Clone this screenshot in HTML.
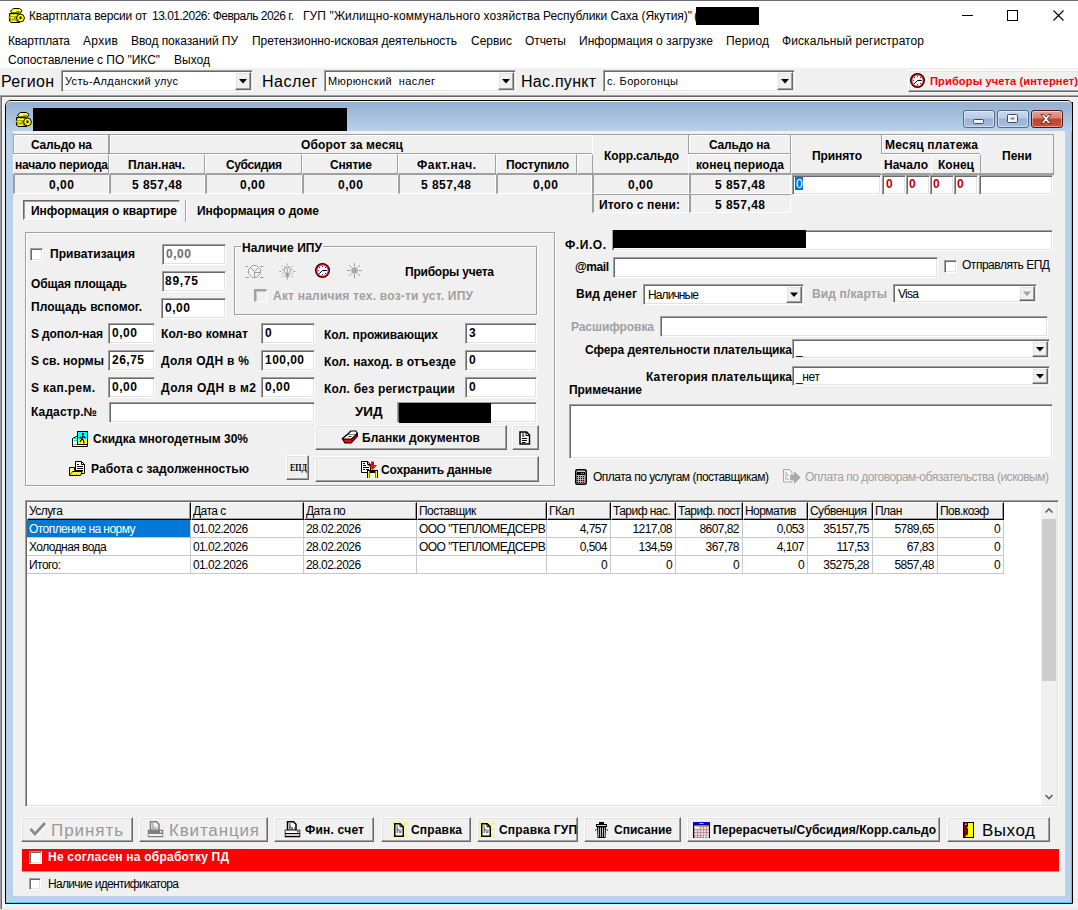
<!DOCTYPE html>
<html><head><meta charset="utf-8"><style>
html,body{margin:0;padding:0;}
body{width:1078px;height:910px;position:relative;overflow:hidden;background:#f0f0f0;font-family:"Liberation Sans",sans-serif;}
body>div,body>span,body>svg{position:absolute;}
.t{white-space:pre;line-height:20px;height:20px;}
</style></head><body>
<div style="left:0px;top:0px;width:1078px;height:68px;background:#fff"></div>
<div style="left:0px;top:0px;width:1078px;height:1px;background:#6b6b78"></div>
<svg style="left:8px;top:8px" width="17" height="16" viewBox="0 0 17 16">
<path d="M5.5 0.5h6l2.5 2-1.5 2.5h-8l-2-1.5 1-1.5z" fill="#ffff00" stroke="#000"/>
<path d="M8 3h4.5l-1 1.5h-4z" fill="#9a9a00"/>
<rect x="5" y="2.5" width="3" height="1" fill="#fff"/>
<path d="M1.5 5.5h9l1 1.5v7.5h-8.5l-1.5-1.5z" fill="#a8a800" stroke="#000"/>
<rect x="2.5" y="6.5" width="7" height="1.5" fill="#ffff00"/>
<rect x="3" y="9" width="3" height="1.5" fill="#ffff00"/>
<rect x="0.5" y="8.5" width="2.5" height="2" fill="#a8a800"/>
<rect x="3" y="12.5" width="5" height="1.5" fill="#ffff00"/>
<circle cx="12.5" cy="10" r="3.9" fill="#ffff00" stroke="#000"/>
<path d="M11.5 8.5h2v2.5h-2z" fill="#000"/>
<path d="M10 11l1 2" stroke="#9a9a00"/>
</svg>
<span id="t0" class="t" style="left:29px;top:6px;font-size:12px;font-weight:normal;color:#000;letter-spacing:-0.175px;">Квартплата версии от</span>
<span id="t1" class="t" style="left:152px;top:6px;font-size:12px;font-weight:normal;color:#000;letter-spacing:-0.504px;">13.01.2026: Февраль 2026 г.</span>
<span id="t2" class="t" style="left:303px;top:6px;font-size:12px;font-weight:normal;color:#000;letter-spacing:0.109px;">ГУП "Жилищно-коммунального хозяйства</span>
<span id="t3" class="t" style="left:543px;top:6px;font-size:12px;font-weight:normal;color:#000;letter-spacing:-0.061px;">Республики Саха (Якутия)"</span>
<span id="t4" class="t" style="left:694px;top:6px;font-size:12px;font-weight:normal;color:#000;">(</span>
<div style="left:696px;top:7px;width:63px;height:18px;background:#000"></div>
<div style="left:962px;top:15px;width:11px;height:1px;background:#000"></div>
<div style="left:1007px;top:10px;width:11px;height:11px;border:1px solid #000;box-sizing:border-box"></div>
<svg style="left:1052px;top:9px" width="13" height="13"><path d="M1.5 1.5l10 10M11.5 1.5l-10 10" stroke="#000" stroke-width="1.1"/></svg>
<span id="t5" class="t" style="left:8px;top:31px;font-size:12px;font-weight:normal;color:#000;letter-spacing:-0.196px;">Квартплата</span>
<span id="t6" class="t" style="left:83px;top:31px;font-size:12px;font-weight:normal;color:#000;letter-spacing:0.344px;">Архив</span>
<span id="t7" class="t" style="left:131px;top:31px;font-size:12px;font-weight:normal;color:#000;letter-spacing:-0.063px;">Ввод показаний ПУ</span>
<span id="t8" class="t" style="left:252px;top:31px;font-size:12px;font-weight:normal;color:#000;letter-spacing:-0.052px;">Претензионно-исковая деятельность</span>
<span id="t9" class="t" style="left:471px;top:31px;font-size:12px;font-weight:normal;color:#000;letter-spacing:-0.019px;">Сервис</span>
<span id="t10" class="t" style="left:525px;top:31px;font-size:12px;font-weight:normal;color:#000;letter-spacing:-0.097px;">Отчеты</span>
<span id="t11" class="t" style="left:579px;top:31px;font-size:12px;font-weight:normal;color:#000;letter-spacing:0.027px;">Информация о загрузке</span>
<span id="t12" class="t" style="left:726px;top:31px;font-size:12px;font-weight:normal;color:#000;letter-spacing:0.181px;">Период</span>
<span id="t13" class="t" style="left:782px;top:31px;font-size:12px;font-weight:normal;color:#000;letter-spacing:0.082px;">Фискальный регистратор</span>
<span id="t14" class="t" style="left:8px;top:50px;font-size:12px;font-weight:normal;color:#000;letter-spacing:-0.041px;">Сопоставление с ПО "ИКС"</span>
<span id="t15" class="t" style="left:174px;top:50px;font-size:12px;font-weight:normal;color:#000;letter-spacing:0.023px;">Выход</span>
<span id="t16" class="t" style="left:1px;top:72px;font-size:16px;font-weight:normal;color:#000;letter-spacing:0.325px;">Регион</span>
<div style="left:61px;top:70px;width:192px;height:22px;background:#fff;border-top:1px solid #a0a0a0;border-left:1px solid #a0a0a0;border-right:1px solid #fff;border-bottom:1px solid #fff;box-sizing:border-box;box-shadow:inset 1px 1px 0 #696969, inset -1px -1px 0 #e3e3e3"></div>
<div style="left:235px;top:72px;width:16px;height:18px;background:#f0f0f0;border-top:1px solid #fff;border-left:1px solid #fff;border-right:1px solid #696969;border-bottom:1px solid #696969;box-sizing:border-box;box-shadow:inset -1px -1px 0 #a0a0a0, inset 1px 1px 0 #e3e3e3"></div>
<svg style="left:235px;top:72px" width="16" height="18"><path d="M4.0 7.0h8l-4 4.5z" fill="#000"/></svg>
<span id="t17" class="t" style="left:65px;top:71px;font-size:11px;font-weight:normal;color:#000;letter-spacing:0.346px;">Усть-Алданский улус</span>
<span id="t18" class="t" style="left:262px;top:72px;font-size:16px;font-weight:normal;color:#000;letter-spacing:0.494px;">Наслег</span>
<div style="left:324px;top:70px;width:192px;height:22px;background:#fff;border-top:1px solid #a0a0a0;border-left:1px solid #a0a0a0;border-right:1px solid #fff;border-bottom:1px solid #fff;box-sizing:border-box;box-shadow:inset 1px 1px 0 #696969, inset -1px -1px 0 #e3e3e3"></div>
<div style="left:498px;top:72px;width:16px;height:18px;background:#f0f0f0;border-top:1px solid #fff;border-left:1px solid #fff;border-right:1px solid #696969;border-bottom:1px solid #696969;box-sizing:border-box;box-shadow:inset -1px -1px 0 #a0a0a0, inset 1px 1px 0 #e3e3e3"></div>
<svg style="left:498px;top:72px" width="16" height="18"><path d="M4.0 7.0h8l-4 4.5z" fill="#000"/></svg>
<span id="t19" class="t" style="left:328px;top:71px;font-size:11px;font-weight:normal;color:#000;letter-spacing:0.387px;">Мюрюнский  наслег</span>
<span id="t20" class="t" style="left:521px;top:72px;font-size:16px;font-weight:normal;color:#000;letter-spacing:0.262px;">Нас.пункт</span>
<div style="left:603px;top:70px;width:192px;height:22px;background:#fff;border-top:1px solid #a0a0a0;border-left:1px solid #a0a0a0;border-right:1px solid #fff;border-bottom:1px solid #fff;box-sizing:border-box;box-shadow:inset 1px 1px 0 #696969, inset -1px -1px 0 #e3e3e3"></div>
<div style="left:777px;top:72px;width:16px;height:18px;background:#f0f0f0;border-top:1px solid #fff;border-left:1px solid #fff;border-right:1px solid #696969;border-bottom:1px solid #696969;box-sizing:border-box;box-shadow:inset -1px -1px 0 #a0a0a0, inset 1px 1px 0 #e3e3e3"></div>
<svg style="left:777px;top:72px" width="16" height="18"><path d="M4.0 7.0h8l-4 4.5z" fill="#000"/></svg>
<span id="t21" class="t" style="left:607px;top:71px;font-size:11px;font-weight:normal;color:#000;letter-spacing:0.331px;">с. Борогонцы</span>
<div style="left:908px;top:70px;width:177px;height:22px;background:#f0f0f0;border-top:1px solid #fff;border-left:1px solid #fff;border-right:1px solid #696969;border-bottom:1px solid #696969;box-sizing:border-box;box-shadow:inset -1px -1px 0 #a0a0a0, inset 1px 1px 0 #e3e3e3"></div>
<svg style="left:910px;top:73px" width="16" height="16" viewBox="0 0 16 16">
<circle cx="7.5" cy="7.5" r="7.5" fill="#000"/>
<circle cx="7.5" cy="7.5" r="6.5" fill="#ff0000"/>
<circle cx="7.5" cy="7.5" r="5.2" fill="#fff"/>
<g fill="#0000ff"><rect x="7" y="2.8" width="1" height="1"/><rect x="11.2" y="7" width="1" height="1"/><rect x="7" y="11.2" width="1" height="1"/><rect x="2.8" y="7" width="1" height="1"/>
<rect x="10" y="4" width="1" height="1"/><rect x="4" y="4" width="1" height="1"/><rect x="10" y="10" width="1" height="1"/><rect x="4" y="10" width="1" height="1"/></g>
<path d="M7.5 7.5h3.5" stroke="#000" stroke-width="1.2"/>
<path d="M7.5 7.5l-2.5 2.5" stroke="#000" stroke-width="1"/>
</svg>
<span id="t22" class="t" style="left:930px;top:71px;font-size:11px;font-weight:bold;color:#ff0000;letter-spacing:0.171px;">Приборы учета (интернет)</span>
<div style="left:0px;top:95px;width:1078px;height:1px;background:#a0a0a0"></div>
<div style="left:0px;top:96px;width:1078px;height:1px;background:#696969"></div>
<div style="left:0px;top:95px;width:1px;height:815px;background:#a0a0a0"></div>
<div style="left:1px;top:96px;width:1px;height:814px;background:#696969"></div>
<div style="left:2px;top:97px;width:1076px;height:813px;background:#f0f0f0;border-top:1px solid #fafafa;border-left:1px solid #fafafa;box-sizing:border-box"></div>
<div style="left:0px;top:909px;width:1078px;height:1px;background:#e6e6e6"></div>
<div style="left:5px;top:100px;width:1068px;height:804px;background:#b9d1ea;border:1px solid #000;border-radius:6px 6px 0 0;box-sizing:border-box"></div>
<div style="left:6px;top:101px;width:1066px;height:30px;background:linear-gradient(#94afd0,#b9d1ea);border-radius:5px 5px 0 0;border-top:1px solid #f4f8fc;box-sizing:border-box"></div>
<div style="left:1072px;top:102px;width:1px;height:801px;background:#000"></div>
<div style="left:6px;top:902px;width:1066px;height:1px;background:#3fd6f5"></div>
<div style="left:1071px;top:131px;width:1px;height:772px;background:#3fd6f5"></div>
<svg style="left:15px;top:112px" width="17" height="16" viewBox="0 0 17 16">
<path d="M5.5 0.5h6l2.5 2-1.5 2.5h-8l-2-1.5 1-1.5z" fill="#ffff00" stroke="#000"/>
<path d="M8 3h4.5l-1 1.5h-4z" fill="#9a9a00"/>
<rect x="5" y="2.5" width="3" height="1" fill="#fff"/>
<path d="M1.5 5.5h9l1 1.5v7.5h-8.5l-1.5-1.5z" fill="#a8a800" stroke="#000"/>
<rect x="2.5" y="6.5" width="7" height="1.5" fill="#ffff00"/>
<rect x="3" y="9" width="3" height="1.5" fill="#ffff00"/>
<rect x="0.5" y="8.5" width="2.5" height="2" fill="#a8a800"/>
<rect x="3" y="12.5" width="5" height="1.5" fill="#ffff00"/>
<circle cx="12.5" cy="10" r="3.9" fill="#ffff00" stroke="#000"/>
<path d="M11.5 8.5h2v2.5h-2z" fill="#000"/>
<path d="M10 11l1 2" stroke="#9a9a00"/>
</svg>
<div style="left:33px;top:108px;width:314px;height:23px;background:#000"></div>
<div style="left:963px;top:110px;width:32px;height:18px;background:linear-gradient(#c9daef 0%,#b6cbe6 45%,#97b1d2 50%,#a9c1df 100%);border:1px solid #53688a;border-radius:3px;box-sizing:border-box;box-shadow:inset 0 0 0 1px rgba(255,255,255,0.45)"></div>
<div style="left:997px;top:110px;width:32px;height:18px;background:linear-gradient(#c9daef 0%,#b6cbe6 45%,#97b1d2 50%,#a9c1df 100%);border:1px solid #53688a;border-radius:3px;box-sizing:border-box;box-shadow:inset 0 0 0 1px rgba(255,255,255,0.45)"></div>
<div style="left:1031px;top:110px;width:32px;height:18px;background:linear-gradient(#e8a496 0%,#d47f6d 45%,#c2412a 50%,#c9513a 100%);border:1px solid #4e1912;border-radius:3px;box-sizing:border-box;box-shadow:inset 0 0 0 1px rgba(255,255,255,0.45)"></div>
<svg style="left:963px;top:110px" width="100" height="18"><rect x="10.5" y="9.5" width="10" height="4" rx="1" fill="#f4f4f4" stroke="#3a4a60" stroke-width="1"/><rect x="44.5" y="4.5" width="10" height="8" rx="1" fill="#f4f4f4" stroke="#3a4a60" stroke-width="1"/><rect x="47.5" y="7.5" width="4" height="2" fill="#6d86a8"/><path d="M78 4.5l3 0 2 2.5 2-2.5 3 0-3.5 4.5 3.5 4.5-3 0-2-2.5-2 2.5-3 0 3.5-4.5z" fill="#f4f4f4" stroke="#4a2018" stroke-width="0.8"/></svg>
<div style="left:13px;top:131px;width:1052px;height:765px;background:#f0f0f0"></div>
<div style="left:13px;top:134px;width:96px;height:20px;background:#f0f0f0;border-top:1px solid #a0a0a0;border-left:1px solid #a0a0a0;border-right:1px solid #a0a0a0;border-bottom:1px solid #a0a0a0;box-sizing:border-box;box-shadow:inset 1px 1px 0 #fff"></div>
<div style="left:109px;top:134px;width:484px;height:20px;background:#f0f0f0;border-top:1px solid #a0a0a0;border-left:1px solid #a0a0a0;border-right:1px solid #a0a0a0;border-bottom:1px solid #a0a0a0;box-sizing:border-box;box-shadow:inset 1px 1px 0 #fff"></div>
<div style="left:592px;top:134px;width:97px;height:41px;background:#f0f0f0;border-top:1px solid #fff;border-left:1px solid #fff;border-right:1px solid #a0a0a0;border-bottom:2px solid #a0a0a0;box-sizing:border-box"></div>
<div style="left:592px;top:134px;width:97px;height:1px;background:#a0a0a0"></div>
<div style="left:688px;top:134px;width:103px;height:20px;background:#f0f0f0;border-top:1px solid #a0a0a0;border-left:1px solid #a0a0a0;border-right:1px solid #a0a0a0;border-bottom:1px solid #a0a0a0;box-sizing:border-box;box-shadow:inset 1px 1px 0 #fff"></div>
<div style="left:791px;top:134px;width:91px;height:41px;background:#f0f0f0;border-top:1px solid #fff;border-left:1px solid #fff;border-right:1px solid #a0a0a0;border-bottom:2px solid #a0a0a0;box-sizing:border-box"></div>
<div style="left:791px;top:134px;width:91px;height:1px;background:#a0a0a0"></div>
<div style="left:881px;top:134px;width:100px;height:20px;background:#f0f0f0;border-top:1px solid #a0a0a0;border-left:1px solid #a0a0a0;border-right:1px solid #a0a0a0;border-bottom:1px solid #a0a0a0;box-sizing:border-box;box-shadow:inset 1px 1px 0 #fff"></div>
<div style="left:980px;top:134px;width:74px;height:41px;background:#f0f0f0;border-top:1px solid #fff;border-left:1px solid #fff;border-right:1px solid #a0a0a0;border-bottom:2px solid #a0a0a0;box-sizing:border-box"></div>
<div style="left:980px;top:134px;width:74px;height:1px;background:#a0a0a0"></div>
<div style="left:13px;top:154px;width:96px;height:21px;background:#f0f0f0;border-top:1px solid #fff;border-left:1px solid #fff;border-right:1px solid #a0a0a0;border-bottom:2px solid #a0a0a0;box-sizing:border-box"></div>
<div style="left:109px;top:154px;width:96px;height:21px;background:#f0f0f0;border-top:1px solid #fff;border-left:1px solid #fff;border-right:1px solid #a0a0a0;border-bottom:2px solid #a0a0a0;box-sizing:border-box"></div>
<div style="left:205px;top:154px;width:97px;height:21px;background:#f0f0f0;border-top:1px solid #fff;border-left:1px solid #fff;border-right:1px solid #a0a0a0;border-bottom:2px solid #a0a0a0;box-sizing:border-box"></div>
<div style="left:302px;top:154px;width:96px;height:21px;background:#f0f0f0;border-top:1px solid #fff;border-left:1px solid #fff;border-right:1px solid #a0a0a0;border-bottom:2px solid #a0a0a0;box-sizing:border-box"></div>
<div style="left:398px;top:154px;width:98px;height:21px;background:#f0f0f0;border-top:1px solid #fff;border-left:1px solid #fff;border-right:1px solid #a0a0a0;border-bottom:2px solid #a0a0a0;box-sizing:border-box"></div>
<div style="left:496px;top:154px;width:81px;height:21px;background:#f0f0f0;border-top:1px solid #fff;border-left:1px solid #fff;border-right:1px solid #a0a0a0;border-bottom:2px solid #a0a0a0;box-sizing:border-box"></div>
<div style="left:577px;top:154px;width:16px;height:21px;background:#f0f0f0;border-top:1px solid #fff;border-left:1px solid #fff;border-right:1px solid #a0a0a0;border-bottom:2px solid #a0a0a0;box-sizing:border-box"></div>
<div style="left:688px;top:154px;width:103px;height:21px;background:#f0f0f0;border-top:1px solid #fff;border-left:1px solid #fff;border-right:1px solid #a0a0a0;border-bottom:2px solid #a0a0a0;box-sizing:border-box"></div>
<div style="left:881px;top:154px;width:51px;height:21px;background:#f0f0f0;border-top:1px solid #fff;border-left:1px solid #fff;border-right:1px solid #a0a0a0;border-bottom:2px solid #a0a0a0;box-sizing:border-box"></div>
<div style="left:931px;top:154px;width:50px;height:21px;background:#f0f0f0;border-top:1px solid #fff;border-left:1px solid #fff;border-right:1px solid #a0a0a0;border-bottom:2px solid #a0a0a0;box-sizing:border-box"></div>
<span id="t23" class="t" style="left:31px;top:135px;font-size:12px;font-weight:bold;color:#000;letter-spacing:-0.213px;">Сальдо на</span>
<span id="t24" class="t" style="left:301px;top:135px;font-size:12px;font-weight:bold;color:#000;letter-spacing:0.148px;">Оборот за месяц</span>
<span id="t25" class="t" style="left:604px;top:146px;font-size:12px;font-weight:bold;color:#000;letter-spacing:-0.109px;">Корр.сальдо</span>
<span id="t26" class="t" style="left:709px;top:135px;font-size:12px;font-weight:bold;color:#000;letter-spacing:-0.213px;">Сальдо на</span>
<span id="t27" class="t" style="left:812px;top:146px;font-size:12px;font-weight:bold;color:#000;letter-spacing:-0.107px;">Принято</span>
<span id="t28" class="t" style="left:885px;top:135px;font-size:12px;font-weight:bold;color:#000;letter-spacing:0.236px;">Месяц платежа</span>
<span id="t29" class="t" style="left:1002px;top:146px;font-size:12px;font-weight:bold;color:#000;letter-spacing:0.021px;">Пени</span>
<span id="t30" class="t" style="left:15px;top:155px;font-size:12px;font-weight:bold;color:#000;letter-spacing:-0.191px;">начало периода</span>
<span id="t31" class="t" style="left:128px;top:155px;font-size:12px;font-weight:bold;color:#000;letter-spacing:-0.055px;">План.нач.</span>
<span id="t32" class="t" style="left:226px;top:155px;font-size:12px;font-weight:bold;color:#000;letter-spacing:-0.377px;">Субсидия</span>
<span id="t33" class="t" style="left:330px;top:155px;font-size:12px;font-weight:bold;color:#000;letter-spacing:-0.169px;">Снятие</span>
<span id="t34" class="t" style="left:417px;top:155px;font-size:12px;font-weight:bold;color:#000;letter-spacing:0.498px;">Факт.нач.</span>
<span id="t35" class="t" style="left:506px;top:155px;font-size:12px;font-weight:bold;color:#000;letter-spacing:-0.219px;">Поступило</span>
<span id="t36" class="t" style="left:696px;top:155px;font-size:12px;font-weight:bold;color:#000;letter-spacing:0.008px;">конец периода</span>
<span id="t37" class="t" style="left:884px;top:155px;font-size:12px;font-weight:bold;color:#000;letter-spacing:0.103px;">Начало</span>
<span id="t38" class="t" style="left:938px;top:155px;font-size:12px;font-weight:bold;color:#000;letter-spacing:0.012px;">Конец</span>
<div style="left:13px;top:175px;width:96px;height:19px;background:#f0f0f0;border-left:2px solid #a0a0a0;border-right:1px solid #fff;border-bottom:1px solid #fff;box-sizing:border-box"></div>
<div style="left:109px;top:175px;width:96px;height:19px;background:#f0f0f0;border-left:2px solid #a0a0a0;border-right:1px solid #fff;border-bottom:1px solid #fff;box-sizing:border-box"></div>
<div style="left:205px;top:175px;width:97px;height:19px;background:#f0f0f0;border-left:2px solid #a0a0a0;border-right:1px solid #fff;border-bottom:1px solid #fff;box-sizing:border-box"></div>
<div style="left:302px;top:175px;width:96px;height:19px;background:#f0f0f0;border-left:2px solid #a0a0a0;border-right:1px solid #fff;border-bottom:1px solid #fff;box-sizing:border-box"></div>
<div style="left:398px;top:175px;width:98px;height:19px;background:#f0f0f0;border-left:2px solid #a0a0a0;border-right:1px solid #fff;border-bottom:1px solid #fff;box-sizing:border-box"></div>
<div style="left:496px;top:175px;width:96px;height:19px;background:#f0f0f0;border-left:2px solid #a0a0a0;border-right:1px solid #fff;border-bottom:1px solid #fff;box-sizing:border-box"></div>
<div style="left:592px;top:175px;width:97px;height:19px;background:#f0f0f0;border-left:2px solid #a0a0a0;border-right:1px solid #fff;border-bottom:1px solid #fff;box-sizing:border-box"></div>
<div style="left:689px;top:175px;width:102px;height:19px;background:#f0f0f0;border-left:2px solid #a0a0a0;border-right:1px solid #fff;border-bottom:1px solid #fff;box-sizing:border-box"></div>
<div style="left:592px;top:194px;width:97px;height:19px;background:#f0f0f0;border-left:2px solid #a0a0a0;border-right:1px solid #fff;border-bottom:1px solid #fff;box-sizing:border-box"></div>
<div style="left:689px;top:194px;width:102px;height:19px;background:#f0f0f0;border-left:2px solid #a0a0a0;border-right:1px solid #fff;border-bottom:1px solid #fff;box-sizing:border-box"></div>
<div style="left:592px;top:194px;width:199px;height:1px;background:#a0a0a0"></div>
<span id="t39" class="t" style="left:49px;top:175px;font-size:12px;font-weight:bold;color:#000;letter-spacing:0.547px;">0,00</span>
<span id="t40" class="t" style="left:132px;top:175px;font-size:12px;font-weight:bold;color:#000;letter-spacing:0.469px;">5 857,48</span>
<span id="t41" class="t" style="left:240px;top:175px;font-size:12px;font-weight:bold;color:#000;letter-spacing:0.547px;">0,00</span>
<span id="t42" class="t" style="left:338px;top:175px;font-size:12px;font-weight:bold;color:#000;letter-spacing:0.547px;">0,00</span>
<span id="t43" class="t" style="left:421px;top:175px;font-size:12px;font-weight:bold;color:#000;letter-spacing:0.469px;">5 857,48</span>
<span id="t44" class="t" style="left:533px;top:175px;font-size:12px;font-weight:bold;color:#000;letter-spacing:0.547px;">0,00</span>
<span id="t45" class="t" style="left:628px;top:175px;font-size:12px;font-weight:bold;color:#000;letter-spacing:0.547px;">0,00</span>
<span id="t46" class="t" style="left:715px;top:175px;font-size:12px;font-weight:bold;color:#000;letter-spacing:0.469px;">5 857,48</span>
<span id="t47" class="t" style="left:599px;top:195px;font-size:12px;font-weight:bold;color:#000;letter-spacing:0.105px;">Итого с пени:</span>
<span id="t48" class="t" style="left:715px;top:195px;font-size:12px;font-weight:bold;color:#000;letter-spacing:0.469px;">5 857,48</span>
<div style="left:792px;top:175px;width:89px;height:20px;background:#fff;border-top:1px solid #a0a0a0;border-left:1px solid #a0a0a0;border-right:1px solid #fff;border-bottom:1px solid #fff;box-sizing:border-box;box-shadow:inset 1px 1px 0 #696969, inset -1px -1px 0 #e3e3e3"></div>
<div style="left:795px;top:177px;width:8px;height:13px;background:#0078d7"></div>
<span id="t49" class="t" style="left:796px;top:174px;font-size:12px;font-weight:normal;color:#fff;">0</span>
<div style="left:882px;top:175px;width:24px;height:20px;background:#fff;border-top:1px solid #a0a0a0;border-left:1px solid #a0a0a0;border-right:1px solid #fff;border-bottom:1px solid #fff;box-sizing:border-box;box-shadow:inset 1px 1px 0 #696969, inset -1px -1px 0 #e3e3e3"></div>
<div style="left:906px;top:175px;width:24px;height:20px;background:#fff;border-top:1px solid #a0a0a0;border-left:1px solid #a0a0a0;border-right:1px solid #fff;border-bottom:1px solid #fff;box-sizing:border-box;box-shadow:inset 1px 1px 0 #696969, inset -1px -1px 0 #e3e3e3"></div>
<div style="left:930px;top:175px;width:24px;height:20px;background:#fff;border-top:1px solid #a0a0a0;border-left:1px solid #a0a0a0;border-right:1px solid #fff;border-bottom:1px solid #fff;box-sizing:border-box;box-shadow:inset 1px 1px 0 #696969, inset -1px -1px 0 #e3e3e3"></div>
<div style="left:954px;top:175px;width:24px;height:20px;background:#fff;border-top:1px solid #a0a0a0;border-left:1px solid #a0a0a0;border-right:1px solid #fff;border-bottom:1px solid #fff;box-sizing:border-box;box-shadow:inset 1px 1px 0 #696969, inset -1px -1px 0 #e3e3e3"></div>
<span id="t50" class="t" style="left:886px;top:174px;font-size:12px;font-weight:bold;color:#c00000;">0</span>
<span id="t51" class="t" style="left:909px;top:174px;font-size:12px;font-weight:bold;color:#c00000;">0</span>
<span id="t52" class="t" style="left:933px;top:174px;font-size:12px;font-weight:bold;color:#c00000;">0</span>
<span id="t53" class="t" style="left:957px;top:174px;font-size:12px;font-weight:bold;color:#c00000;">0</span>
<div style="left:979px;top:175px;width:74px;height:20px;background:#fff;border-top:1px solid #a0a0a0;border-left:1px solid #a0a0a0;border-right:1px solid #fff;border-bottom:1px solid #fff;box-sizing:border-box;box-shadow:inset 1px 1px 0 #696969, inset -1px -1px 0 #e3e3e3"></div>
<div style="left:23px;top:200px;width:157px;height:20px;background:#f6f6f6;border-top:1px solid #696969;border-left:1px solid #696969;border-right:1px solid #fff;border-bottom:1px solid #fff;box-sizing:border-box;box-shadow:inset 1px 1px 0 #a0a0a0"></div>
<div style="left:185px;top:200px;width:1px;height:22px;background:#a0a0a0"></div>
<div style="left:186px;top:200px;width:1px;height:22px;background:#fff"></div>
<span id="t54" class="t" style="left:31px;top:201px;font-size:12px;font-weight:bold;color:#000;letter-spacing:-0.010px;">Информация о квартире</span>
<span id="t55" class="t" style="left:197px;top:201px;font-size:12px;font-weight:bold;color:#000;letter-spacing:-0.013px;">Информация о доме</span>
<div style="left:25px;top:232px;width:530px;height:254px;border:1px solid #a0a0a0;box-shadow:1px 1px 0 #fff, inset 1px 1px 0 #fff;box-sizing:border-box"></div>
<div style="left:234px;top:246px;width:303px;height:69px;border:1px solid #a0a0a0;box-shadow:1px 1px 0 #fff, inset 1px 1px 0 #fff;box-sizing:border-box"></div>
<div style="left:241px;top:240px;width:82px;height:14px;background:#f0f0f0"></div>
<span id="t56" class="t" style="left:242px;top:238px;font-size:12px;font-weight:bold;color:#000;letter-spacing:0.059px;">Наличие ИПУ</span>
<div style="left:30px;top:248px;width:13px;height:13px;background:#fff;border-top:1px solid #a0a0a0;border-left:1px solid #a0a0a0;border-right:1px solid #fff;border-bottom:1px solid #fff;box-sizing:border-box;box-shadow:inset 1px 1px 0 #696969, inset -1px -1px 0 #e3e3e3"></div>
<span id="t57" class="t" style="left:50px;top:244px;font-size:12px;font-weight:bold;color:#000;letter-spacing:0.026px;">Приватизация</span>
<div style="left:162px;top:244px;width:64px;height:21px;background:#fff;border-top:1px solid #a0a0a0;border-left:1px solid #a0a0a0;border-right:1px solid #fff;border-bottom:1px solid #fff;box-sizing:border-box;box-shadow:inset 1px 1px 0 #696969, inset -1px -1px 0 #e3e3e3"></div>
<span id="t58" class="t" style="left:166px;top:244px;font-size:12px;font-weight:bold;color:#6d6d6d;letter-spacing:0.547px;">0,00</span>
<span id="t59" class="t" style="left:31px;top:274px;font-size:12px;font-weight:bold;color:#000;letter-spacing:-0.168px;">Общая площадь</span>
<div style="left:162px;top:271px;width:64px;height:21px;background:#fff;border-top:1px solid #a0a0a0;border-left:1px solid #a0a0a0;border-right:1px solid #fff;border-bottom:1px solid #fff;box-sizing:border-box;box-shadow:inset 1px 1px 0 #696969, inset -1px -1px 0 #e3e3e3"></div>
<span id="t60" class="t" style="left:165px;top:271px;font-size:12px;font-weight:bold;color:#000;letter-spacing:0.742px;">89,75</span>
<span id="t61" class="t" style="left:31px;top:297px;font-size:12px;font-weight:bold;color:#000;letter-spacing:0.064px;">Площадь вспомог.</span>
<div style="left:161px;top:298px;width:65px;height:21px;background:#fff;border-top:1px solid #a0a0a0;border-left:1px solid #a0a0a0;border-right:1px solid #fff;border-bottom:1px solid #fff;box-sizing:border-box;box-shadow:inset 1px 1px 0 #696969, inset -1px -1px 0 #e3e3e3"></div>
<span id="t62" class="t" style="left:165px;top:298px;font-size:12px;font-weight:bold;color:#000;letter-spacing:0.547px;">0,00</span>
<span id="t63" class="t" style="left:31px;top:324px;font-size:12px;font-weight:bold;color:#000;letter-spacing:-0.111px;">S допол-ная</span>
<div style="left:108px;top:323px;width:47px;height:21px;background:#fff;border-top:1px solid #a0a0a0;border-left:1px solid #a0a0a0;border-right:1px solid #fff;border-bottom:1px solid #fff;box-sizing:border-box;box-shadow:inset 1px 1px 0 #696969, inset -1px -1px 0 #e3e3e3"></div>
<span id="t64" class="t" style="left:112px;top:323px;font-size:12px;font-weight:bold;color:#000;letter-spacing:0.547px;">0,00</span>
<span id="t65" class="t" style="left:161px;top:324px;font-size:12px;font-weight:bold;color:#000;letter-spacing:0.120px;">Кол-во комнат</span>
<div style="left:261px;top:323px;width:54px;height:21px;background:#fff;border-top:1px solid #a0a0a0;border-left:1px solid #a0a0a0;border-right:1px solid #fff;border-bottom:1px solid #fff;box-sizing:border-box;box-shadow:inset 1px 1px 0 #696969, inset -1px -1px 0 #e3e3e3"></div>
<span id="t66" class="t" style="left:265px;top:323px;font-size:12px;font-weight:bold;color:#000;letter-spacing:0.312px;">0</span>
<span id="t67" class="t" style="left:324px;top:325px;font-size:12px;font-weight:bold;color:#000;letter-spacing:-0.041px;">Кол. проживающих</span>
<div style="left:465px;top:323px;width:72px;height:21px;background:#fff;border-top:1px solid #a0a0a0;border-left:1px solid #a0a0a0;border-right:1px solid #fff;border-bottom:1px solid #fff;box-sizing:border-box;box-shadow:inset 1px 1px 0 #696969, inset -1px -1px 0 #e3e3e3"></div>
<span id="t68" class="t" style="left:469px;top:323px;font-size:12px;font-weight:bold;color:#000;">3</span>
<span id="t69" class="t" style="left:31px;top:351px;font-size:12px;font-weight:bold;color:#000;letter-spacing:0.006px;">S св. нормы</span>
<div style="left:108px;top:350px;width:47px;height:21px;background:#fff;border-top:1px solid #a0a0a0;border-left:1px solid #a0a0a0;border-right:1px solid #fff;border-bottom:1px solid #fff;box-sizing:border-box;box-shadow:inset 1px 1px 0 #696969, inset -1px -1px 0 #e3e3e3"></div>
<span id="t70" class="t" style="left:112px;top:350px;font-size:12px;font-weight:bold;color:#000;letter-spacing:0.492px;">26,75</span>
<span id="t71" class="t" style="left:161px;top:351px;font-size:12px;font-weight:bold;color:#000;letter-spacing:0.291px;">Доля ОДН в %</span>
<div style="left:261px;top:350px;width:54px;height:21px;background:#fff;border-top:1px solid #a0a0a0;border-left:1px solid #a0a0a0;border-right:1px solid #fff;border-bottom:1px solid #fff;box-sizing:border-box;box-shadow:inset 1px 1px 0 #696969, inset -1px -1px 0 #e3e3e3"></div>
<span id="t72" class="t" style="left:265px;top:350px;font-size:12px;font-weight:bold;color:#000;letter-spacing:0.459px;">100,00</span>
<span id="t73" class="t" style="left:324px;top:352px;font-size:12px;font-weight:bold;color:#000;letter-spacing:0.115px;">Кол. наход. в отъезде</span>
<div style="left:465px;top:350px;width:72px;height:21px;background:#fff;border-top:1px solid #a0a0a0;border-left:1px solid #a0a0a0;border-right:1px solid #fff;border-bottom:1px solid #fff;box-sizing:border-box;box-shadow:inset 1px 1px 0 #696969, inset -1px -1px 0 #e3e3e3"></div>
<span id="t74" class="t" style="left:469px;top:350px;font-size:12px;font-weight:bold;color:#000;">0</span>
<span id="t75" class="t" style="left:31px;top:378px;font-size:12px;font-weight:bold;color:#000;letter-spacing:0.372px;">S кап.рем.</span>
<div style="left:108px;top:377px;width:47px;height:21px;background:#fff;border-top:1px solid #a0a0a0;border-left:1px solid #a0a0a0;border-right:1px solid #fff;border-bottom:1px solid #fff;box-sizing:border-box;box-shadow:inset 1px 1px 0 #696969, inset -1px -1px 0 #e3e3e3"></div>
<span id="t76" class="t" style="left:112px;top:377px;font-size:12px;font-weight:bold;color:#000;letter-spacing:0.547px;">0,00</span>
<span id="t77" class="t" style="left:161px;top:378px;font-size:12px;font-weight:bold;color:#000;letter-spacing:0.444px;">Доля ОДН в м2</span>
<div style="left:261px;top:377px;width:54px;height:21px;background:#fff;border-top:1px solid #a0a0a0;border-left:1px solid #a0a0a0;border-right:1px solid #fff;border-bottom:1px solid #fff;box-sizing:border-box;box-shadow:inset 1px 1px 0 #696969, inset -1px -1px 0 #e3e3e3"></div>
<span id="t78" class="t" style="left:265px;top:377px;font-size:12px;font-weight:bold;color:#000;letter-spacing:0.547px;">0,00</span>
<span id="t79" class="t" style="left:324px;top:379px;font-size:12px;font-weight:bold;color:#000;letter-spacing:0.205px;">Кол. без регистрации</span>
<div style="left:465px;top:377px;width:72px;height:21px;background:#fff;border-top:1px solid #a0a0a0;border-left:1px solid #a0a0a0;border-right:1px solid #fff;border-bottom:1px solid #fff;box-sizing:border-box;box-shadow:inset 1px 1px 0 #696969, inset -1px -1px 0 #e3e3e3"></div>
<span id="t80" class="t" style="left:469px;top:377px;font-size:12px;font-weight:bold;color:#000;">0</span>
<span id="t81" class="t" style="left:31px;top:402px;font-size:12px;font-weight:bold;color:#000;letter-spacing:0.121px;">Кадастр.№</span>
<div style="left:109px;top:402px;width:206px;height:21px;background:#fff;border-top:1px solid #a0a0a0;border-left:1px solid #a0a0a0;border-right:1px solid #fff;border-bottom:1px solid #fff;box-sizing:border-box;box-shadow:inset 1px 1px 0 #696969, inset -1px -1px 0 #e3e3e3"></div>
<span id="t82" class="t" style="left:355px;top:402px;font-size:12px;font-weight:bold;color:#000;transform:scaleX(1.12);transform-origin:0 0">УИД</span>
<div style="left:397px;top:402px;width:140px;height:21px;background:#fff;border-top:1px solid #a0a0a0;border-left:1px solid #a0a0a0;border-right:1px solid #fff;border-bottom:1px solid #fff;box-sizing:border-box;box-shadow:inset 1px 1px 0 #696969, inset -1px -1px 0 #e3e3e3"></div>
<div style="left:399px;top:403px;width:92px;height:20px;background:#000"></div>
<svg style="left:245px;top:262px" width="120" height="18" viewBox="0 0 120 18">
<g fill="none" stroke="#9c9c9c" stroke-width="1">
<path d="M7.5 3.5H11.5L15.5 7.5V11.5L11.5 15.5H7.5L3.5 11.5V7.5z"/>
<path d="M5.5 5.5L9.5 9.5L13.5 5.5M9.5 9.5V15.5M9.5 10.5H15.5"/>
<path d="M0.5 4.5H3M15 4.5H18.5M0.5 15.5H4M15 15.5H18.5"/>
<circle cx="42.3" cy="8.5" r="3.3"/>
<path d="M42.3 6.5V12"/>
<path d="M42.30 3.30L42.30 1.50M46.68 5.12L47.96 3.84M48.50 9.50L50.30 9.50M46.68 13.88L47.96 15.16M42.30 15.70L42.30 17.50M37.92 13.88L36.64 15.16M36.10 9.50L34.30 9.50M37.92 5.12L36.64 3.84"/>
<path d="M43.40 4.32L45.19 5.06M46.74 6.61L47.48 8.40M47.48 10.60L46.74 12.39M45.19 13.94L43.40 14.68M41.20 14.68L39.41 13.94M37.86 12.39L37.12 10.60M37.12 8.40L37.86 6.61M39.41 5.06L41.20 4.32" stroke-width="0.8"/>
<path d="M109.5 1v3.5M109.5 12.5v3.5M102 8.5h3.5M113.5 8.5h3.5M104 3l2.5 2.5M115 3l-2.5 2.5M104 14l2.5-2.5M115 14l-2.5-2.5"/>
</g>
<path d="M40.3 12H44.3L42.3 16.5z" fill="#9c9c9c"/>
<circle cx="109.5" cy="8.5" r="3.2" fill="#a8a8a8"/>
</svg>
<svg style="left:315px;top:263px" width="16" height="16" viewBox="0 0 16 16">
<circle cx="7.5" cy="7.5" r="7.5" fill="#000"/>
<circle cx="7.5" cy="7.5" r="6.5" fill="#ff0000"/>
<circle cx="7.5" cy="7.5" r="5.2" fill="#fff"/>
<g fill="#0000ff"><rect x="7" y="2.8" width="1" height="1"/><rect x="11.2" y="7" width="1" height="1"/><rect x="7" y="11.2" width="1" height="1"/><rect x="2.8" y="7" width="1" height="1"/>
<rect x="10" y="4" width="1" height="1"/><rect x="4" y="4" width="1" height="1"/><rect x="10" y="10" width="1" height="1"/><rect x="4" y="10" width="1" height="1"/></g>
<path d="M7.5 7.5h3.5" stroke="#000" stroke-width="1.2"/>
<path d="M7.5 7.5l-2.5 2.5" stroke="#000" stroke-width="1"/>
</svg>
<span id="t83" class="t" style="left:405px;top:262px;font-size:12px;font-weight:bold;color:#000;letter-spacing:-0.225px;">Приборы учета</span>
<div style="left:254px;top:289px;width:13px;height:13px;background:#fff;border-top:1px solid #a0a0a0;border-left:1px solid #a0a0a0;border-right:1px solid #fff;border-bottom:1px solid #fff;box-sizing:border-box;box-shadow:inset 1px 1px 0 #696969, inset -1px -1px 0 #e3e3e3"></div>
<div style="left:255px;top:290px;width:12px;height:12px;background:#f0f0f0;border-top:1px solid #a0a0a0;border-left:1px solid #a0a0a0;border-right:1px solid #fff;border-bottom:1px solid #fff;box-sizing:border-box;box-shadow:inset 1px 1px 0 #c8c8c8"></div>
<span id="t84" class="t" style="left:273px;top:286px;font-size:12px;font-weight:bold;color:#a0a0a0;letter-spacing:0.212px;">Акт наличия тех. воз-ти уст. ИПУ</span>
<svg style="left:71px;top:431px" width="18" height="17" viewBox="0 0 18 17">
<path d="M1.5 7.5l5-2.5h10v10.5h-15z" fill="#fff" stroke="#000"/>
<path d="M2.5 7.5h4M2.5 9.5h4" stroke="#00e0e0"/>
<path d="M2.5 13.5h13" stroke="#a0a0a0"/>
<rect x="6.5" y="0.5" width="10" height="13" fill="#00ffff" stroke="#000"/>
<rect x="7" y="8" width="9" height="5" fill="#ffff00"/>
<circle cx="12" cy="3" r="1.1" fill="#000"/>
<path d="M12 4.5l-1 3 1.5 2 0.5 3M11 7.5l-2 3.5M10 6l-1.5 1.5M12.5 5.5l2 1.5" stroke="#000" stroke-width="1.2" fill="none"/>
</svg>
<span id="t85" class="t" style="left:93px;top:429px;font-size:12px;font-weight:bold;color:#000;letter-spacing:0.005px;">Скидка многодетным 30%</span>
<svg style="left:69px;top:461px" width="18" height="16" viewBox="0 0 18 16">
<path d="M6.5 0.5H12.5L15.5 3.5V12.5H6.5z" fill="#fff" stroke="#000"/>
<path d="M12.5 0.5V3.5H15.5" fill="none" stroke="#000"/>
<rect x="8" y="3" width="2" height="1" fill="#000"/>
<rect x="8" y="5" width="6" height="1" fill="#000"/>
<rect x="8" y="7" width="6" height="1" fill="#000"/>
<rect x="8" y="9" width="6" height="1" fill="#000"/>
<path d="M0.5 6.5H5.5V9.5H8.5L13.5 9.5L11.5 14.5H0.5z" fill="#ffff60" stroke="#000"/>
<path d="M1.5 13.5L3.5 10.5H13" stroke="#000" fill="none"/>
<path d="M2 12h1M4 12h1M6 12h1M8 12h1M10 12h1M3 13.5h1M5 13.5h1M7 13.5h1M9 13.5h1" stroke="#d0d000"/>
</svg>
<span id="t86" class="t" style="left:91px;top:459px;font-size:12px;font-weight:bold;color:#000;letter-spacing:0.069px;">Работа с задолженностью</span>
<div style="left:286px;top:455px;width:23px;height:25px;background:#f0f0f0;border-top:1px solid #fff;border-left:1px solid #fff;border-right:1px solid #696969;border-bottom:1px solid #696969;box-sizing:border-box;box-shadow:inset -1px -1px 0 #a0a0a0, inset 1px 1px 0 #e3e3e3"></div>
<span id="t87" class="t" style="left:290px;top:458px;font-size:10px;font-weight:bold;color:#000;font-family:'Liberation Serif';transform:scaleX(0.8);transform-origin:0 0">ЕПД</span>
<div style="left:315px;top:425px;width:192px;height:25px;background:#f0f0f0;border-top:1px solid #fff;border-left:1px solid #fff;border-right:1px solid #696969;border-bottom:1px solid #696969;box-sizing:border-box;box-shadow:inset -1px -1px 0 #a0a0a0, inset 1px 1px 0 #e3e3e3"></div>
<svg style="left:341px;top:430px" width="18" height="15" viewBox="0 0 18 15">
<path d="M0.5 8.5L7 3L9.5 0.5H15L17 3V6.5L10.5 13.5H3.5z" fill="#000"/>
<path d="M2.5 8.5L7.5 4.5H14.5L10 8.5z" fill="#fff"/>
<path d="M9 2.8L10.3 1.5H14.5L15.5 3L14.5 4H8z" fill="#fff"/>
<path d="M7.5 6.5h3" stroke="#000" stroke-width="0.8"/>
<path d="M2.5 9.5H10V12.5H4z" fill="#ff0000"/>
<path d="M11 9.5L15.8 4.8V6.3L11 11.3z" fill="#e00000"/>
</svg>
<span id="t88" class="t" style="left:362px;top:428px;font-size:12px;font-weight:bold;color:#000;letter-spacing:0.025px;">Бланки документов</span>
<div style="left:512px;top:425px;width:27px;height:25px;background:#f0f0f0;border-top:1px solid #fff;border-left:1px solid #fff;border-right:1px solid #696969;border-bottom:1px solid #696969;box-sizing:border-box;box-shadow:inset -1px -1px 0 #a0a0a0, inset 1px 1px 0 #e3e3e3"></div>
<svg style="left:519px;top:431px" width="12" height="14" viewBox="0 0 12 14">
<path d="M1 1h6.5l3 3v9h-9.5z" fill="#fff" stroke="#000" stroke-width="1.5"/>
<path d="M7 1v3.5h3.5" fill="none" stroke="#000" stroke-width="1"/>
<path d="M3 3h2M3 5h2.5M3 7.5h5M3 9.5h5M3 11.5h3.5" stroke="#000" stroke-width="1"/>
</svg>
<div style="left:315px;top:456px;width:224px;height:26px;background:#f0f0f0;border-top:1px solid #fff;border-left:1px solid #fff;border-right:1px solid #696969;border-bottom:1px solid #696969;box-sizing:border-box;box-shadow:inset -1px -1px 0 #a0a0a0, inset 1px 1px 0 #e3e3e3"></div>
<svg style="left:361px;top:461px" width="17" height="17" viewBox="0 0 17 17">
<path d="M0.5 0.5H6.5L9.5 3.5V11.5H0.5z" fill="#fff" stroke="#000"/>
<path d="M6.5 0.5V3.5H9.5" fill="none" stroke="#000"/>
<rect x="2" y="2" width="2" height="1" fill="#000"/>
<rect x="2" y="4" width="3" height="1" fill="#000"/>
<rect x="2" y="6" width="6" height="1" fill="#000"/>
<rect x="2" y="8" width="2" height="1" fill="#000"/><rect x="5" y="8" width="3" height="1" fill="#000"/>
<rect x="6" y="9" width="11" height="8" fill="#000"/>
<rect x="7" y="10" width="1.5" height="7" fill="#ffff00"/>
<rect x="14.5" y="10" width="1.5" height="7" fill="#ffff00"/>
<rect x="9" y="12" width="5" height="5" fill="#fff"/>
<path d="M10 0.5h3v3.5h3l-4.5 5-4.5-5h3z" fill="#ff0000"/>
</svg>
<span id="t89" class="t" style="left:381px;top:460px;font-size:12px;font-weight:bold;color:#000;letter-spacing:-0.153px;">Сохранить данные</span>
<span id="t90" class="t" style="left:565px;top:235px;font-size:12px;font-weight:bold;color:#000;letter-spacing:0.559px;">Ф.И.О.</span>
<div style="left:612px;top:230px;width:441px;height:21px;background:#fff;border-top:1px solid #a0a0a0;border-left:1px solid #a0a0a0;border-right:1px solid #fff;border-bottom:1px solid #fff;box-sizing:border-box;box-shadow:inset 1px 1px 0 #696969, inset -1px -1px 0 #e3e3e3"></div>
<div style="left:613px;top:230px;width:193px;height:18px;background:#000"></div>
<span id="t91" class="t" style="left:575px;top:257px;font-size:12px;font-weight:bold;color:#000;letter-spacing:-0.430px;">@mail</span>
<div style="left:613px;top:257px;width:325px;height:21px;background:#fff;border-top:1px solid #a0a0a0;border-left:1px solid #a0a0a0;border-right:1px solid #fff;border-bottom:1px solid #fff;box-sizing:border-box;box-shadow:inset 1px 1px 0 #696969, inset -1px -1px 0 #e3e3e3"></div>
<div style="left:944px;top:260px;width:13px;height:13px;background:#fff;border-top:1px solid #a0a0a0;border-left:1px solid #a0a0a0;border-right:1px solid #fff;border-bottom:1px solid #fff;box-sizing:border-box;box-shadow:inset 1px 1px 0 #696969, inset -1px -1px 0 #e3e3e3"></div>
<span id="t92" class="t" style="left:962px;top:255px;font-size:12px;font-weight:normal;color:#000;letter-spacing:-0.471px;">Отправлять ЕПД</span>
<span id="t93" class="t" style="left:576px;top:284px;font-size:12px;font-weight:bold;color:#000;letter-spacing:0.098px;">Вид денег</span>
<div style="left:643px;top:284px;width:161px;height:21px;background:#fff;border-top:1px solid #a0a0a0;border-left:1px solid #a0a0a0;border-right:1px solid #fff;border-bottom:1px solid #fff;box-sizing:border-box;box-shadow:inset 1px 1px 0 #696969, inset -1px -1px 0 #e3e3e3"></div>
<div style="left:786px;top:286px;width:16px;height:17px;background:#f0f0f0;border-top:1px solid #fff;border-left:1px solid #fff;border-right:1px solid #696969;border-bottom:1px solid #696969;box-sizing:border-box;box-shadow:inset -1px -1px 0 #a0a0a0, inset 1px 1px 0 #e3e3e3"></div>
<svg style="left:786px;top:286px" width="16" height="17"><path d="M4.0 6.5h8l-4 4.5z" fill="#000"/></svg>
<span id="t94" class="t" style="left:648px;top:285px;font-size:12px;font-weight:normal;color:#000;letter-spacing:-0.891px;">Наличные</span>
<span id="t95" class="t" style="left:812px;top:284px;font-size:12px;font-weight:bold;color:#a0a0a0;letter-spacing:0.144px;">Вид п/карты</span>
<div style="left:893px;top:284px;width:144px;height:19px;background:#fff;border-top:1px solid #a0a0a0;border-left:1px solid #a0a0a0;border-right:1px solid #fff;border-bottom:1px solid #fff;box-sizing:border-box;box-shadow:inset 1px 1px 0 #696969, inset -1px -1px 0 #e3e3e3"></div>
<div style="left:1019px;top:286px;width:16px;height:15px;background:#f0f0f0;border-top:1px solid #fff;border-left:1px solid #fff;border-right:1px solid #696969;border-bottom:1px solid #696969;box-sizing:border-box;box-shadow:inset -1px -1px 0 #a0a0a0, inset 1px 1px 0 #e3e3e3"></div>
<svg style="left:1019px;top:286px" width="16" height="15"><path d="M4.0 5.5h8l-4 4.5z" fill="#a0a0a0"/></svg>
<span id="t96" class="t" style="left:898px;top:284px;font-size:12px;font-weight:normal;color:#000;letter-spacing:-0.714px;">Visa</span>
<span id="t97" class="t" style="left:571px;top:317px;font-size:12px;font-weight:bold;color:#a0a0a0;letter-spacing:-0.080px;">Расшифровка</span>
<div style="left:660px;top:316px;width:388px;height:21px;background:#fff;border-top:1px solid #a0a0a0;border-left:1px solid #a0a0a0;border-right:1px solid #fff;border-bottom:1px solid #fff;box-sizing:border-box;box-shadow:inset 1px 1px 0 #696969, inset -1px -1px 0 #e3e3e3"></div>
<span id="t98" class="t" style="left:585px;top:340px;font-size:12px;font-weight:bold;color:#000;letter-spacing:-0.058px;">Сфера деятельности плательщика</span>
<div style="left:792px;top:339px;width:258px;height:20px;background:#fff;border-top:1px solid #a0a0a0;border-left:1px solid #a0a0a0;border-right:1px solid #fff;border-bottom:1px solid #fff;box-sizing:border-box;box-shadow:inset 1px 1px 0 #696969, inset -1px -1px 0 #e3e3e3"></div>
<div style="left:1032px;top:341px;width:16px;height:16px;background:#f0f0f0;border-top:1px solid #fff;border-left:1px solid #fff;border-right:1px solid #696969;border-bottom:1px solid #696969;box-sizing:border-box;box-shadow:inset -1px -1px 0 #a0a0a0, inset 1px 1px 0 #e3e3e3"></div>
<svg style="left:1032px;top:341px" width="16" height="16"><path d="M4.0 6.0h8l-4 4.5z" fill="#000"/></svg>
<span id="t99" class="t" style="left:796px;top:340px;font-size:12px;font-weight:normal;color:#000;">_</span>
<span id="t100" class="t" style="left:646px;top:367px;font-size:12px;font-weight:bold;color:#000;letter-spacing:0.141px;">Категория плательщика</span>
<div style="left:792px;top:366px;width:258px;height:20px;background:#fff;border-top:1px solid #a0a0a0;border-left:1px solid #a0a0a0;border-right:1px solid #fff;border-bottom:1px solid #fff;box-sizing:border-box;box-shadow:inset 1px 1px 0 #696969, inset -1px -1px 0 #e3e3e3"></div>
<div style="left:1032px;top:368px;width:16px;height:16px;background:#f0f0f0;border-top:1px solid #fff;border-left:1px solid #fff;border-right:1px solid #696969;border-bottom:1px solid #696969;box-sizing:border-box;box-shadow:inset -1px -1px 0 #a0a0a0, inset 1px 1px 0 #e3e3e3"></div>
<svg style="left:1032px;top:368px" width="16" height="16"><path d="M4.0 6.0h8l-4 4.5z" fill="#000"/></svg>
<span id="t101" class="t" style="left:796px;top:367px;font-size:12px;font-weight:normal;color:#000;letter-spacing:-0.359px;">_нет</span>
<span id="t102" class="t" style="left:569px;top:380px;font-size:12px;font-weight:bold;color:#000;letter-spacing:-0.059px;">Примечание</span>
<div style="left:569px;top:404px;width:484px;height:55px;background:#fff;border-top:1px solid #a0a0a0;border-left:1px solid #a0a0a0;border-right:1px solid #fff;border-bottom:1px solid #fff;box-sizing:border-box;box-shadow:inset 1px 1px 0 #696969, inset -1px -1px 0 #e3e3e3"></div>
<svg style="left:575px;top:469px" width="12" height="16" viewBox="0 0 12 16">
<rect x="0.75" y="0.75" width="10.5" height="14.5" rx="1.5" fill="#c8c8c8" stroke="#000" stroke-width="1.5"/>
<rect x="2" y="3" width="8" height="3" fill="#000"/>
<rect x="6" y="4" width="1" height="1" fill="#00ffff"/><rect x="8" y="4" width="1" height="1" fill="#00ffff"/>
<g fill="#000"><rect x="2" y="7" width="1.2" height="1.2"/><rect x="4" y="7" width="1.2" height="1.2"/><rect x="6" y="7" width="1.2" height="1.2"/><rect x="8" y="7" width="1.2" height="1.2"/>
<rect x="2" y="9" width="1.2" height="1.2"/><rect x="4" y="9" width="1.2" height="1.2"/><rect x="6" y="9" width="1.2" height="1.2"/><rect x="8" y="9" width="1.2" height="1.2"/>
<rect x="2" y="11" width="1.2" height="1.2"/><rect x="4" y="11" width="1.2" height="1.2"/><rect x="6" y="11" width="1.2" height="1.2"/><rect x="8" y="11" width="1.2" height="1.2"/>
<rect x="2" y="13" width="1.2" height="1.2"/><rect x="4" y="13" width="1.2" height="1.2"/></g>
<rect x="6" y="12.8" width="3.5" height="1.4" fill="#ff0000"/>
</svg>
<span id="t103" class="t" style="left:593px;top:467px;font-size:12px;font-weight:normal;color:#000;letter-spacing:-0.498px;">Оплата по услугам (поставщикам)</span>
<svg style="left:783px;top:469px" width="18" height="17" viewBox="0 0 18 17">
<path d="M0.5 0.5h6l2.5 2.5v10h-8.5z" fill="#f4f4f4" stroke="#a8a8a8"/>
<path d="M2 4h2M2 6h4M2 8h2M2 10h4" stroke="#a8a8a8"/>
<path d="M7 6h4v-4l6.5 6.5-6.5 6.5v-4h-4z" fill="#a8a8a8"/>
</svg>
<span id="t104" class="t" style="left:805px;top:467px;font-size:12px;font-weight:normal;color:#a0a0a0;letter-spacing:-0.486px;">Оплата по договорам-обязательства (исковым)</span>
<div style="left:25px;top:500px;width:1034px;height:307px;background:#fff;border-top:1px solid #a0a0a0;border-left:1px solid #a0a0a0;border-right:1px solid #fff;border-bottom:1px solid #fff;box-sizing:border-box;box-shadow:inset 1px 1px 0 #696969, inset -1px -1px 0 #e3e3e3"></div>
<div style="left:27px;top:502px;width:164px;height:18px;background:#f0f0f0;border-top:1px solid #fff;border-left:1px solid #fff;border-right:1px solid #000;border-bottom:1px solid #000;box-sizing:border-box;box-shadow:inset -1px -1px 0 #a0a0a0"></div>
<span class="t" style="left:29px;top:501px;width:160px;overflow:hidden;font-size:12px;letter-spacing:-0.55px;">Услуга</span>
<div style="left:27px;top:520px;width:164px;height:18px;background:#0078d7;border-right:1px solid #c8c8c8;border-bottom:1px solid #c8c8c8;box-sizing:border-box"></div>
<span class="t" style="left:29px;top:519px;width:161px;overflow:hidden;font-size:12px;color:#fff;letter-spacing:-0.55px;">Отопление на норму</span>
<div style="left:27px;top:538px;width:164px;height:18px;background:#fff;border-right:1px solid #c8c8c8;border-bottom:1px solid #c8c8c8;box-sizing:border-box"></div>
<span class="t" style="left:29px;top:537px;width:161px;overflow:hidden;font-size:12px;color:#000;letter-spacing:-0.55px;">Холодная вода</span>
<div style="left:27px;top:556px;width:164px;height:18px;background:#fff;border-right:1px solid #c8c8c8;border-bottom:1px solid #c8c8c8;box-sizing:border-box"></div>
<span class="t" style="left:29px;top:555px;width:161px;overflow:hidden;font-size:12px;color:#000;letter-spacing:-0.55px;">Итого:</span>
<div style="left:191px;top:502px;width:113px;height:18px;background:#f0f0f0;border-top:1px solid #fff;border-left:1px solid #fff;border-right:1px solid #000;border-bottom:1px solid #000;box-sizing:border-box;box-shadow:inset -1px -1px 0 #a0a0a0"></div>
<span class="t" style="left:193px;top:501px;width:109px;overflow:hidden;font-size:12px;letter-spacing:-0.55px;">Дата с</span>
<div style="left:191px;top:520px;width:113px;height:18px;background:#fff;border-right:1px solid #c8c8c8;border-bottom:1px solid #c8c8c8;box-sizing:border-box"></div>
<span class="t" style="left:193px;top:519px;width:110px;overflow:hidden;font-size:12px;color:#000;letter-spacing:-0.55px;">01.02.2026</span>
<div style="left:191px;top:538px;width:113px;height:18px;background:#fff;border-right:1px solid #c8c8c8;border-bottom:1px solid #c8c8c8;box-sizing:border-box"></div>
<span class="t" style="left:193px;top:537px;width:110px;overflow:hidden;font-size:12px;color:#000;letter-spacing:-0.55px;">01.02.2026</span>
<div style="left:191px;top:556px;width:113px;height:18px;background:#fff;border-right:1px solid #c8c8c8;border-bottom:1px solid #c8c8c8;box-sizing:border-box"></div>
<span class="t" style="left:193px;top:555px;width:110px;overflow:hidden;font-size:12px;color:#000;letter-spacing:-0.55px;">01.02.2026</span>
<div style="left:304px;top:502px;width:113px;height:18px;background:#f0f0f0;border-top:1px solid #fff;border-left:1px solid #fff;border-right:1px solid #000;border-bottom:1px solid #000;box-sizing:border-box;box-shadow:inset -1px -1px 0 #a0a0a0"></div>
<span class="t" style="left:306px;top:501px;width:109px;overflow:hidden;font-size:12px;letter-spacing:-0.55px;">Дата по</span>
<div style="left:304px;top:520px;width:113px;height:18px;background:#fff;border-right:1px solid #c8c8c8;border-bottom:1px solid #c8c8c8;box-sizing:border-box"></div>
<span class="t" style="left:306px;top:519px;width:110px;overflow:hidden;font-size:12px;color:#000;letter-spacing:-0.55px;">28.02.2026</span>
<div style="left:304px;top:538px;width:113px;height:18px;background:#fff;border-right:1px solid #c8c8c8;border-bottom:1px solid #c8c8c8;box-sizing:border-box"></div>
<span class="t" style="left:306px;top:537px;width:110px;overflow:hidden;font-size:12px;color:#000;letter-spacing:-0.55px;">28.02.2026</span>
<div style="left:304px;top:556px;width:113px;height:18px;background:#fff;border-right:1px solid #c8c8c8;border-bottom:1px solid #c8c8c8;box-sizing:border-box"></div>
<span class="t" style="left:306px;top:555px;width:110px;overflow:hidden;font-size:12px;color:#000;letter-spacing:-0.55px;">28.02.2026</span>
<div style="left:417px;top:502px;width:130px;height:18px;background:#f0f0f0;border-top:1px solid #fff;border-left:1px solid #fff;border-right:1px solid #000;border-bottom:1px solid #000;box-sizing:border-box;box-shadow:inset -1px -1px 0 #a0a0a0"></div>
<span class="t" style="left:419px;top:501px;width:126px;overflow:hidden;font-size:12px;letter-spacing:-0.55px;">Поставщик</span>
<div style="left:417px;top:520px;width:130px;height:18px;background:#fff;border-right:1px solid #c8c8c8;border-bottom:1px solid #c8c8c8;box-sizing:border-box"></div>
<span class="t" style="left:419px;top:519px;width:127px;overflow:hidden;font-size:12px;color:#000;letter-spacing:-0.55px;">ООО &quot;ТЕПЛОМЕДСЕРВИС&quot;</span>
<div style="left:417px;top:538px;width:130px;height:18px;background:#fff;border-right:1px solid #c8c8c8;border-bottom:1px solid #c8c8c8;box-sizing:border-box"></div>
<span class="t" style="left:419px;top:537px;width:127px;overflow:hidden;font-size:12px;color:#000;letter-spacing:-0.55px;">ООО &quot;ТЕПЛОМЕДСЕРВИС&quot;</span>
<div style="left:417px;top:556px;width:130px;height:18px;background:#fff;border-right:1px solid #c8c8c8;border-bottom:1px solid #c8c8c8;box-sizing:border-box"></div>
<div style="left:547px;top:502px;width:64px;height:18px;background:#f0f0f0;border-top:1px solid #fff;border-left:1px solid #fff;border-right:1px solid #000;border-bottom:1px solid #000;box-sizing:border-box;box-shadow:inset -1px -1px 0 #a0a0a0"></div>
<span class="t" style="left:549px;top:501px;width:60px;overflow:hidden;font-size:12px;letter-spacing:-0.55px;">ГКал</span>
<div style="left:547px;top:520px;width:64px;height:18px;background:#fff;border-right:1px solid #c8c8c8;border-bottom:1px solid #c8c8c8;box-sizing:border-box"></div>
<span class="t" style="left:547px;top:519px;width:60px;text-align:right;font-size:12px;color:#000;letter-spacing:-0.55px;">4,757</span>
<div style="left:547px;top:538px;width:64px;height:18px;background:#fff;border-right:1px solid #c8c8c8;border-bottom:1px solid #c8c8c8;box-sizing:border-box"></div>
<span class="t" style="left:547px;top:537px;width:60px;text-align:right;font-size:12px;color:#000;letter-spacing:-0.55px;">0,504</span>
<div style="left:547px;top:556px;width:64px;height:18px;background:#fff;border-right:1px solid #c8c8c8;border-bottom:1px solid #c8c8c8;box-sizing:border-box"></div>
<span class="t" style="left:547px;top:555px;width:60px;text-align:right;font-size:12px;color:#000;letter-spacing:-0.55px;">0</span>
<div style="left:611px;top:502px;width:65px;height:18px;background:#f0f0f0;border-top:1px solid #fff;border-left:1px solid #fff;border-right:1px solid #000;border-bottom:1px solid #000;box-sizing:border-box;box-shadow:inset -1px -1px 0 #a0a0a0"></div>
<span class="t" style="left:613px;top:501px;width:61px;overflow:hidden;font-size:12px;letter-spacing:-0.55px;">Тариф нас.</span>
<div style="left:611px;top:520px;width:65px;height:18px;background:#fff;border-right:1px solid #c8c8c8;border-bottom:1px solid #c8c8c8;box-sizing:border-box"></div>
<span class="t" style="left:611px;top:519px;width:61px;text-align:right;font-size:12px;color:#000;letter-spacing:-0.55px;">1217,08</span>
<div style="left:611px;top:538px;width:65px;height:18px;background:#fff;border-right:1px solid #c8c8c8;border-bottom:1px solid #c8c8c8;box-sizing:border-box"></div>
<span class="t" style="left:611px;top:537px;width:61px;text-align:right;font-size:12px;color:#000;letter-spacing:-0.55px;">134,59</span>
<div style="left:611px;top:556px;width:65px;height:18px;background:#fff;border-right:1px solid #c8c8c8;border-bottom:1px solid #c8c8c8;box-sizing:border-box"></div>
<span class="t" style="left:611px;top:555px;width:61px;text-align:right;font-size:12px;color:#000;letter-spacing:-0.55px;">0</span>
<div style="left:676px;top:502px;width:67px;height:18px;background:#f0f0f0;border-top:1px solid #fff;border-left:1px solid #fff;border-right:1px solid #000;border-bottom:1px solid #000;box-sizing:border-box;box-shadow:inset -1px -1px 0 #a0a0a0"></div>
<span class="t" style="left:678px;top:501px;width:63px;overflow:hidden;font-size:12px;letter-spacing:-0.55px;">Тариф. пост</span>
<div style="left:676px;top:520px;width:67px;height:18px;background:#fff;border-right:1px solid #c8c8c8;border-bottom:1px solid #c8c8c8;box-sizing:border-box"></div>
<span class="t" style="left:676px;top:519px;width:63px;text-align:right;font-size:12px;color:#000;letter-spacing:-0.55px;">8607,82</span>
<div style="left:676px;top:538px;width:67px;height:18px;background:#fff;border-right:1px solid #c8c8c8;border-bottom:1px solid #c8c8c8;box-sizing:border-box"></div>
<span class="t" style="left:676px;top:537px;width:63px;text-align:right;font-size:12px;color:#000;letter-spacing:-0.55px;">367,78</span>
<div style="left:676px;top:556px;width:67px;height:18px;background:#fff;border-right:1px solid #c8c8c8;border-bottom:1px solid #c8c8c8;box-sizing:border-box"></div>
<span class="t" style="left:676px;top:555px;width:63px;text-align:right;font-size:12px;color:#000;letter-spacing:-0.55px;">0</span>
<div style="left:743px;top:502px;width:65px;height:18px;background:#f0f0f0;border-top:1px solid #fff;border-left:1px solid #fff;border-right:1px solid #000;border-bottom:1px solid #000;box-sizing:border-box;box-shadow:inset -1px -1px 0 #a0a0a0"></div>
<span class="t" style="left:745px;top:501px;width:61px;overflow:hidden;font-size:12px;letter-spacing:-0.55px;">Норматив</span>
<div style="left:743px;top:520px;width:65px;height:18px;background:#fff;border-right:1px solid #c8c8c8;border-bottom:1px solid #c8c8c8;box-sizing:border-box"></div>
<span class="t" style="left:743px;top:519px;width:61px;text-align:right;font-size:12px;color:#000;letter-spacing:-0.55px;">0,053</span>
<div style="left:743px;top:538px;width:65px;height:18px;background:#fff;border-right:1px solid #c8c8c8;border-bottom:1px solid #c8c8c8;box-sizing:border-box"></div>
<span class="t" style="left:743px;top:537px;width:61px;text-align:right;font-size:12px;color:#000;letter-spacing:-0.55px;">4,107</span>
<div style="left:743px;top:556px;width:65px;height:18px;background:#fff;border-right:1px solid #c8c8c8;border-bottom:1px solid #c8c8c8;box-sizing:border-box"></div>
<span class="t" style="left:743px;top:555px;width:61px;text-align:right;font-size:12px;color:#000;letter-spacing:-0.55px;">0</span>
<div style="left:808px;top:502px;width:65px;height:18px;background:#f0f0f0;border-top:1px solid #fff;border-left:1px solid #fff;border-right:1px solid #000;border-bottom:1px solid #000;box-sizing:border-box;box-shadow:inset -1px -1px 0 #a0a0a0"></div>
<span class="t" style="left:810px;top:501px;width:61px;overflow:hidden;font-size:12px;letter-spacing:-0.55px;">Субвенция</span>
<div style="left:808px;top:520px;width:65px;height:18px;background:#fff;border-right:1px solid #c8c8c8;border-bottom:1px solid #c8c8c8;box-sizing:border-box"></div>
<span class="t" style="left:808px;top:519px;width:61px;text-align:right;font-size:12px;color:#000;letter-spacing:-0.55px;">35157,75</span>
<div style="left:808px;top:538px;width:65px;height:18px;background:#fff;border-right:1px solid #c8c8c8;border-bottom:1px solid #c8c8c8;box-sizing:border-box"></div>
<span class="t" style="left:808px;top:537px;width:61px;text-align:right;font-size:12px;color:#000;letter-spacing:-0.55px;">117,53</span>
<div style="left:808px;top:556px;width:65px;height:18px;background:#fff;border-right:1px solid #c8c8c8;border-bottom:1px solid #c8c8c8;box-sizing:border-box"></div>
<span class="t" style="left:808px;top:555px;width:61px;text-align:right;font-size:12px;color:#000;letter-spacing:-0.55px;">35275,28</span>
<div style="left:873px;top:502px;width:65px;height:18px;background:#f0f0f0;border-top:1px solid #fff;border-left:1px solid #fff;border-right:1px solid #000;border-bottom:1px solid #000;box-sizing:border-box;box-shadow:inset -1px -1px 0 #a0a0a0"></div>
<span class="t" style="left:875px;top:501px;width:61px;overflow:hidden;font-size:12px;letter-spacing:-0.55px;">План</span>
<div style="left:873px;top:520px;width:65px;height:18px;background:#fff;border-right:1px solid #c8c8c8;border-bottom:1px solid #c8c8c8;box-sizing:border-box"></div>
<span class="t" style="left:873px;top:519px;width:61px;text-align:right;font-size:12px;color:#000;letter-spacing:-0.55px;">5789,65</span>
<div style="left:873px;top:538px;width:65px;height:18px;background:#fff;border-right:1px solid #c8c8c8;border-bottom:1px solid #c8c8c8;box-sizing:border-box"></div>
<span class="t" style="left:873px;top:537px;width:61px;text-align:right;font-size:12px;color:#000;letter-spacing:-0.55px;">67,83</span>
<div style="left:873px;top:556px;width:65px;height:18px;background:#fff;border-right:1px solid #c8c8c8;border-bottom:1px solid #c8c8c8;box-sizing:border-box"></div>
<span class="t" style="left:873px;top:555px;width:61px;text-align:right;font-size:12px;color:#000;letter-spacing:-0.55px;">5857,48</span>
<div style="left:938px;top:502px;width:66px;height:18px;background:#f0f0f0;border-top:1px solid #fff;border-left:1px solid #fff;border-right:1px solid #000;border-bottom:1px solid #000;box-sizing:border-box;box-shadow:inset -1px -1px 0 #a0a0a0"></div>
<span class="t" style="left:940px;top:501px;width:62px;overflow:hidden;font-size:12px;letter-spacing:-0.55px;">Пов.коэф</span>
<div style="left:938px;top:520px;width:66px;height:18px;background:#fff;border-right:1px solid #c8c8c8;border-bottom:1px solid #c8c8c8;box-sizing:border-box"></div>
<span class="t" style="left:938px;top:519px;width:62px;text-align:right;font-size:12px;color:#000;letter-spacing:-0.55px;">0</span>
<div style="left:938px;top:538px;width:66px;height:18px;background:#fff;border-right:1px solid #c8c8c8;border-bottom:1px solid #c8c8c8;box-sizing:border-box"></div>
<span class="t" style="left:938px;top:537px;width:62px;text-align:right;font-size:12px;color:#000;letter-spacing:-0.55px;">0</span>
<div style="left:938px;top:556px;width:66px;height:18px;background:#fff;border-right:1px solid #c8c8c8;border-bottom:1px solid #c8c8c8;box-sizing:border-box"></div>
<span class="t" style="left:938px;top:555px;width:62px;text-align:right;font-size:12px;color:#000;letter-spacing:-0.55px;">0</span>
<div style="left:1041px;top:502px;width:16px;height:303px;background:#f0f0f0"></div>
<div style="left:1042px;top:519px;width:14px;height:162px;background:#cdcdcd"></div>
<svg style="left:1041px;top:502px" width="16" height="303"><path d="M4.5 10.5l3.5-3.5 3.5 3.5" fill="none" stroke="#606060" stroke-width="1.6"/><path d="M4.5 293l3.5 3.5 3.5-3.5" fill="none" stroke="#606060" stroke-width="1.6"/></svg>
<div style="left:21px;top:817px;width:112px;height:25px;background:#f0f0f0;border-top:1px solid #fff;border-left:1px solid #fff;border-right:1px solid #696969;border-bottom:1px solid #696969;box-sizing:border-box;box-shadow:inset -1px -1px 0 #a0a0a0, inset 1px 1px 0 #e3e3e3"></div>
<svg style="left:29px;top:822px" width="18" height="14" viewBox="0 0 18 14">
<path d="M2 7.5l5 5.5 10-12" fill="none" stroke="#fff" stroke-width="2.6" transform="translate(0.8,0.8)"/>
<path d="M1.5 7l4.5 5 10-11" fill="none" stroke="#8a8a8a" stroke-width="2.8"/>
</svg>
<span id="t105" class="t" style="left:51px;top:821px;font-size:17px;font-weight:normal;color:#999999;letter-spacing:0.932px;">Принять</span>
<div style="left:139px;top:817px;width:129px;height:25px;background:#f0f0f0;border-top:1px solid #fff;border-left:1px solid #fff;border-right:1px solid #696969;border-bottom:1px solid #696969;box-sizing:border-box;box-shadow:inset -1px -1px 0 #a0a0a0, inset 1px 1px 0 #e3e3e3"></div>
<svg style="left:147px;top:821px" width="17" height="17" viewBox="0 0 17 17">
<path d="M3.5 0.75h6l2.5 2.5v6h-8.5z" fill="#f0f0f0" stroke="#808080" stroke-width="1.5"/>
<path d="M5 3h1.5M5 5h2M5 7h4M10 7h0.8" stroke="#808080" stroke-width="1"/>
<rect x="0.75" y="8.75" width="15.5" height="7.5" fill="#808080"/>
<rect x="1.5" y="9.5" width="14" height="2.5" fill="#808080"/>
<rect x="1.5" y="13" width="14" height="2" fill="#f0f0f0"/>
<rect x="13" y="10" width="1.6" height="1.6" fill="#fff"/>
</svg>
<span id="t106" class="t" style="left:169px;top:821px;font-size:17px;font-weight:normal;color:#999999;letter-spacing:0.836px;">Квитанция</span>
<div style="left:274px;top:817px;width:100px;height:25px;background:#f0f0f0;border-top:1px solid #fff;border-left:1px solid #fff;border-right:1px solid #696969;border-bottom:1px solid #696969;box-sizing:border-box;box-shadow:inset -1px -1px 0 #a0a0a0, inset 1px 1px 0 #e3e3e3"></div>
<svg style="left:284px;top:821px" width="17" height="17" viewBox="0 0 17 17">
<path d="M3.5 0.75h6l2.5 2.5v6h-8.5z" fill="#fff" stroke="#000" stroke-width="1.5"/>
<path d="M5 3h1.5M5 5h2M5 7h4M10 7h0.8" stroke="#000" stroke-width="1"/>
<rect x="0.75" y="8.75" width="15.5" height="7.5" fill="#000"/>
<rect x="1.5" y="9.5" width="14" height="2.5" fill="#fff"/>
<rect x="1.5" y="13" width="14" height="2" fill="#d0d0d0"/>
<rect x="13" y="10" width="1.6" height="1.6" fill="#ff0000"/>
</svg>
<span id="t107" class="t" style="left:305px;top:820px;font-size:12px;font-weight:bold;color:#000;letter-spacing:0.217px;">Фин. счет</span>
<div style="left:381px;top:817px;width:90px;height:25px;background:#f0f0f0;border-top:1px solid #fff;border-left:1px solid #fff;border-right:1px solid #696969;border-bottom:1px solid #696969;box-sizing:border-box;box-shadow:inset -1px -1px 0 #a0a0a0, inset 1px 1px 0 #e3e3e3"></div>
<svg style="left:391px;top:821px" width="17" height="17" viewBox="0 0 17 17">
<path d="M1 1l3 3M8 0.5v3M16 1l-3 3M0.5 8.5h3M13.5 8.5h3M1 16l3-3M8 13.5v3M16 16l-3-3" stroke="#ffff00" stroke-width="1.6"/>
<path d="M3.75 2.75h5.5l3 3v9.5h-8.5z" fill="#fff" stroke="#000" stroke-width="1.5"/>
<path d="M9 2.75v3h3" fill="none" stroke="#000"/>
<path d="M5.5 5h1M5.5 7h1.5M5.5 9h3M9.5 9h1M5.5 11h1.5M8 11h2.5" stroke="#000" stroke-width="1"/>
</svg>
<span id="t108" class="t" style="left:411px;top:820px;font-size:12px;font-weight:bold;color:#000;letter-spacing:0.169px;">Справка</span>
<div style="left:477px;top:817px;width:101px;height:25px;background:#f0f0f0;border-top:1px solid #fff;border-left:1px solid #fff;border-right:1px solid #696969;border-bottom:1px solid #696969;box-sizing:border-box;box-shadow:inset -1px -1px 0 #a0a0a0, inset 1px 1px 0 #e3e3e3"></div>
<svg style="left:478px;top:821px" width="17" height="17" viewBox="0 0 17 17">
<path d="M1 1l3 3M8 0.5v3M16 1l-3 3M0.5 8.5h3M13.5 8.5h3M1 16l3-3M8 13.5v3M16 16l-3-3" stroke="#ffff00" stroke-width="1.6"/>
<path d="M3.75 2.75h5.5l3 3v9.5h-8.5z" fill="#fff" stroke="#000" stroke-width="1.5"/>
<path d="M9 2.75v3h3" fill="none" stroke="#000"/>
<path d="M5.5 5h1M5.5 7h1.5M5.5 9h3M9.5 9h1M5.5 11h1.5M8 11h2.5" stroke="#000" stroke-width="1"/>
</svg>
<span id="t109" class="t" style="left:499px;top:820px;font-size:12px;font-weight:bold;color:#000;letter-spacing:0.180px;">Справка ГУП</span>
<div style="left:584px;top:817px;width:97px;height:25px;background:#f0f0f0;border-top:1px solid #fff;border-left:1px solid #fff;border-right:1px solid #696969;border-bottom:1px solid #696969;box-sizing:border-box;box-shadow:inset -1px -1px 0 #a0a0a0, inset 1px 1px 0 #e3e3e3"></div>
<svg style="left:595px;top:822px" width="14" height="17" viewBox="0 0 14 17">
<rect x="4" y="0" width="5" height="2.5" fill="#000"/>
<rect x="1" y="2" width="11" height="3" fill="#000"/>
<rect x="2" y="3" width="9" height="1" fill="#d0d0d0"/>
<path d="M2 5h9l-0.5 11h-8z" fill="#000"/>
<path d="M3.5 5.5v9.5M5.5 5.5v9.5M7.5 5.5v9.5M9.5 5.5v9.5" stroke="#d0d0d0" stroke-width="0.9"/>
<path d="M0 8.5l1.5-1M13 8.5l-1.5-1" stroke="#000"/>
</svg>
<span id="t110" class="t" style="left:614px;top:820px;font-size:12px;font-weight:bold;color:#000;letter-spacing:-0.013px;">Списание</span>
<div style="left:687px;top:817px;width:253px;height:25px;background:#f0f0f0;border-top:1px solid #fff;border-left:1px solid #fff;border-right:1px solid #696969;border-bottom:1px solid #696969;box-sizing:border-box;box-shadow:inset -1px -1px 0 #a0a0a0, inset 1px 1px 0 #e3e3e3"></div>
<svg style="left:693px;top:822px" width="17" height="16" viewBox="0 0 17 16">
<rect x="0" y="0" width="17" height="16" fill="#000"/>
<rect x="0" y="0" width="17" height="2.5" fill="#0000ff"/>
<rect x="6.5" y="1" width="4" height="1" fill="#c0c0a0"/>
<rect x="1" y="3" width="15" height="12" fill="#808080"/>
<rect x="1.5" y="4.5" width="5.3" height="2.3" fill="#fff"/>
<rect x="7.5" y="4.5" width="2.3" height="2.3" fill="#fff"/><rect x="7.5" y="4.5" width="1" height="1" fill="#ff0000"/><rect x="10.5" y="4.5" width="2.3" height="2.3" fill="#fff"/><rect x="10.5" y="4.5" width="1" height="1" fill="#ff0000"/><rect x="13.5" y="4.5" width="2.3" height="2.3" fill="#fff"/><rect x="13.5" y="4.5" width="1" height="1" fill="#ff0000"/><rect x="1.5" y="7.5" width="2.3" height="2.3" fill="#fff"/><rect x="1.5" y="7.5" width="1" height="1" fill="#ff0000"/><rect x="4.5" y="7.5" width="2.3" height="2.3" fill="#fff"/><rect x="4.5" y="7.5" width="1" height="1" fill="#ff0000"/><rect x="7.5" y="7.5" width="2.3" height="2.3" fill="#fff"/><rect x="7.5" y="7.5" width="1" height="1" fill="#ff0000"/><rect x="10.5" y="7.5" width="2.3" height="2.3" fill="#fff"/><rect x="10.5" y="7.5" width="1" height="1" fill="#ff0000"/><rect x="13.5" y="7.5" width="2.3" height="2.3" fill="#fff"/><rect x="13.5" y="7.5" width="1" height="1" fill="#ff0000"/><rect x="1.5" y="10.5" width="2.3" height="2.3" fill="#fff"/><rect x="1.5" y="10.5" width="1" height="1" fill="#ff0000"/><rect x="4.5" y="10.5" width="2.3" height="2.3" fill="#fff"/><rect x="4.5" y="10.5" width="1" height="1" fill="#ff0000"/><rect x="7.5" y="10.5" width="2.3" height="2.3" fill="#fff"/><rect x="7.5" y="10.5" width="1" height="1" fill="#ff0000"/><rect x="10.5" y="10.5" width="2.3" height="2.3" fill="#fff"/><rect x="10.5" y="10.5" width="1" height="1" fill="#ff0000"/><rect x="13.5" y="10.5" width="2.3" height="2.3" fill="#fff"/><rect x="13.5" y="10.5" width="1" height="1" fill="#ff0000"/><rect x="1.5" y="13.5" width="2.3" height="2.3" fill="#fff"/><rect x="1.5" y="13.5" width="1" height="1" fill="#ff0000"/><rect x="4.5" y="13.5" width="2.3" height="2.3" fill="#fff"/><rect x="4.5" y="13.5" width="1" height="1" fill="#ff0000"/><rect x="7.5" y="13.5" width="2.3" height="2.3" fill="#fff"/><rect x="7.5" y="13.5" width="1" height="1" fill="#ff0000"/><rect x="10.5" y="13.5" width="2.3" height="2.3" fill="#fff"/><rect x="13.5" y="13.5" width="2.3" height="2.3" fill="#fff"/>
</svg>
<span id="t111" class="t" style="left:713px;top:820px;font-size:12px;font-weight:bold;color:#000;letter-spacing:0.075px;">Перерасчеты/Субсидия/Корр.сальдо</span>
<div style="left:947px;top:817px;width:103px;height:25px;background:#f0f0f0;border-top:1px solid #fff;border-left:1px solid #fff;border-right:1px solid #696969;border-bottom:1px solid #696969;box-sizing:border-box;box-shadow:inset -1px -1px 0 #a0a0a0, inset 1px 1px 0 #e3e3e3"></div>
<svg style="left:963px;top:822px" width="11" height="16" viewBox="0 0 11 16">
<rect x="0" y="0" width="11" height="16" fill="#000"/>
<rect x="5" y="1" width="5" height="14" fill="#ffff00"/>
<path d="M1 1h3.5v10.5l-2.5 3.5h-1z" fill="#800000"/>
<path d="M4.5 12l-2.5 3h3" fill="#ffff00"/>
<rect x="2" y="1.5" width="1.5" height="1.5" fill="#00ffff"/>
<rect x="4" y="5" width="1.2" height="1.2" fill="#ffff00"/>
</svg>
<span id="t112" class="t" style="left:982px;top:821px;font-size:17px;font-weight:normal;color:#000;letter-spacing:0.531px;">Выход</span>
<div style="left:22px;top:849px;width:1037px;height:23px;background:#ff0000;border-bottom:1px solid #a0a0a0;box-sizing:border-box"></div>
<div style="left:29px;top:851px;width:13px;height:13px;background:#fff;border-top:1px solid #a0a0a0;border-left:1px solid #a0a0a0;border-right:1px solid #fff;border-bottom:1px solid #fff;box-sizing:border-box;box-shadow:inset 1px 1px 0 #696969, inset -1px -1px 0 #e3e3e3"></div>
<span id="t113" class="t" style="left:48px;top:847px;font-size:12px;font-weight:bold;color:#fff;letter-spacing:0.226px;">Не согласен на обработку ПД</span>
<div style="left:29px;top:878px;width:12px;height:12px;background:#fff;border-top:1px solid #a0a0a0;border-left:1px solid #a0a0a0;border-right:1px solid #fff;border-bottom:1px solid #fff;box-sizing:border-box;box-shadow:inset 1px 1px 0 #696969, inset -1px -1px 0 #e3e3e3"></div>
<span id="t114" class="t" style="left:48px;top:874px;font-size:12px;font-weight:normal;color:#000;letter-spacing:-0.672px;">Наличие идентификатора</span>
</body></html>
